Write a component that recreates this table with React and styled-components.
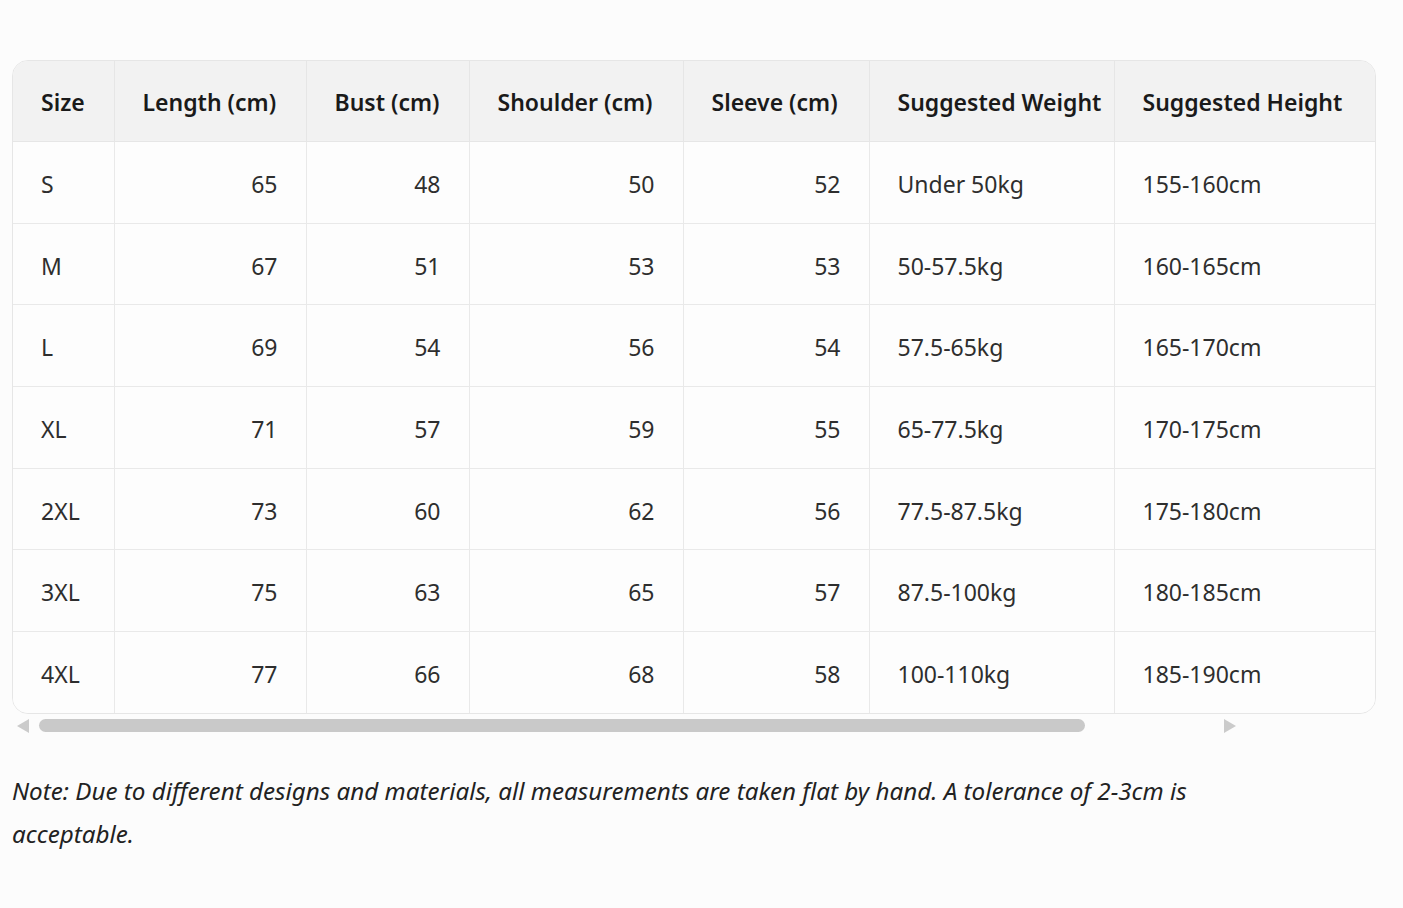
import React from "react";
import styled, { createGlobalStyle } from "styled-components";

const Global = createGlobalStyle`
  html, body { margin: 0; padding: 0; background: #fcfcfc; }
  body { font-family: "Noto Sans", "Open Sans", sans-serif; color: #333; }
`;

const Page = styled.div`
  padding: 60px 27px 0 12px;
  width: 1364px;
`;

const TableWrap = styled.div`
  border: 1px solid #e6e6e6;
  border-radius: 16px;
  overflow: hidden;
  width: 1362px;
`;

const Table = styled.table`
  border-collapse: collapse;
  table-layout: fixed;
  width: 100%;
  font-size: 23px;
`;

const HeadCell = styled.th`
  background: #f2f2f2;
  color: #1a1a1a;
  font-weight: 600;
  text-align: left;
  height: 79px;
  padding: 1px 0 0 28px;
  white-space: nowrap;
  border-right: 1px solid #e6e6e6;
  border-bottom: 1px solid #e6e6e6;
  &:last-child { border-right: none; }
`;

const Cell = styled.td`
  background: #fdfdfd;
  color: #2e2e2e;
  height: 77.7px;
  padding: 3px 28px 0;
  text-align: ${(p) => (p.$num ? "right" : "left")};
  white-space: nowrap;
  border-right: 1px solid #e9e9e9;
  border-bottom: 1px solid #e9e9e9;
  &:last-child { border-right: none; }
  tr:last-child & { border-bottom: none; }
`;

const ScrollBar = styled.div`
  display: flex;
  align-items: center;
  width: 1224px;
  height: 24px;
`;

const Arrow = styled.div`
  width: 0;
  height: 0;
  border-top: 7px solid transparent;
  border-bottom: 7px solid transparent;
  ${(p) =>
    p.$dir === "left"
      ? "border-right: 12px solid #cbcbcb; margin: 0 10px 0 5px;"
      : "border-left: 12px solid #cbcbcb; margin-left: auto;"}
`;

const Thumb = styled.div`
  width: 1046px;
  height: 13px;
  border-radius: 7px;
  background: #c9c9c9;
`;

const Note = styled.p`
  margin: 31px 0 0;
  width: 1220px;
  font-family: "Noto Sans", sans-serif;
  font-style: italic;
  font-size: 24.2px;
  line-height: 43px;
  color: #222;
`;

const cols = [101, 192, 163, 214, 186, 245, 261];
const headers = [
  "Size",
  "Length (cm)",
  "Bust (cm)",
  "Shoulder (cm)",
  "Sleeve (cm)",
  "Suggested Weight",
  "Suggested Height",
];
const rows = [
  ["S", 65, 48, 50, 52, "Under 50kg", "155-160cm"],
  ["M", 67, 51, 53, 53, "50-57.5kg", "160-165cm"],
  ["L", 69, 54, 56, 54, "57.5-65kg", "165-170cm"],
  ["XL", 71, 57, 59, 55, "65-77.5kg", "170-175cm"],
  ["2XL", 73, 60, 62, 56, "77.5-87.5kg", "175-180cm"],
  ["3XL", 75, 63, 65, 57, "87.5-100kg", "180-185cm"],
  ["4XL", 77, 66, 68, 58, "100-110kg", "185-190cm"],
];

export default function App() {
  return (
    <>
      <Global />
      <Page>
        <TableWrap>
          <Table>
            <colgroup>
              {cols.map((w, i) => (
                <col key={i} style={{ width: w }} />
              ))}
            </colgroup>
            <thead>
              <tr>
                {headers.map((h) => (
                  <HeadCell key={h}>{h}</HeadCell>
                ))}
              </tr>
            </thead>
            <tbody>
              {rows.map((r) => (
                <tr key={r[0]}>
                  {r.map((v, i) => (
                    <Cell key={i} $num={typeof v === "number"}>
                      {v}
                    </Cell>
                  ))}
                </tr>
              ))}
            </tbody>
          </Table>
        </TableWrap>
        <ScrollBar>
          <Arrow $dir="left" />
          <Thumb />
          <Arrow $dir="right" />
        </ScrollBar>
        <Note>
          Note: Due to different designs and materials, all measurements are
          taken flat by hand. A tolerance of 2-3cm is acceptable.
        </Note>
      </Page>
    </>
  );
}
